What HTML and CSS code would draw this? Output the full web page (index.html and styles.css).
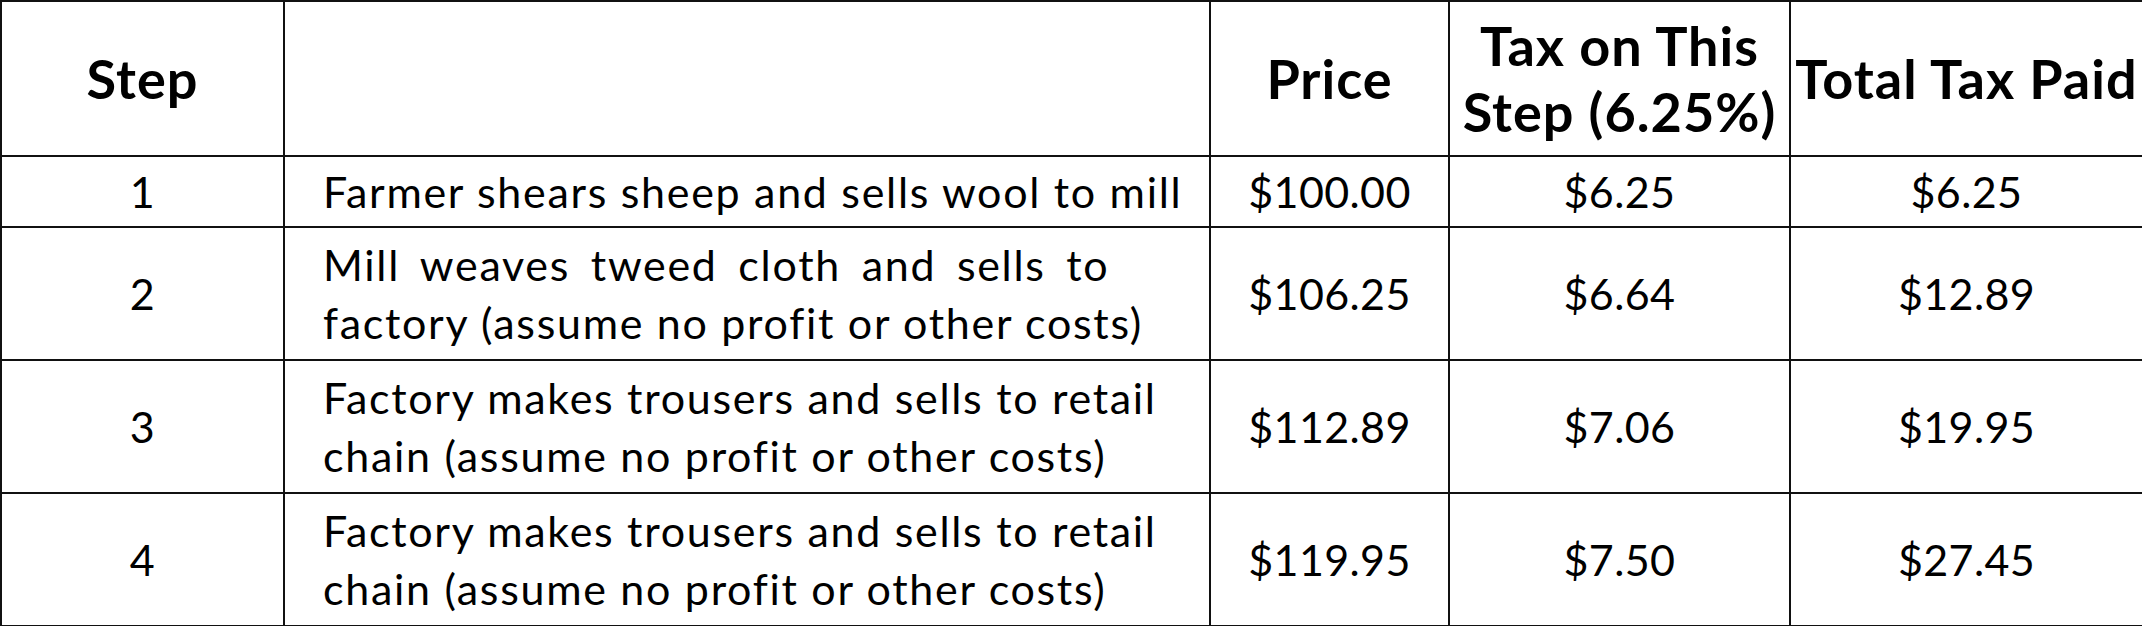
FILE: index.html
```html
<!DOCTYPE html>
<html>
<head>
<meta charset="utf-8">
<link rel="stylesheet" href="styles.css">
</head>
<body>
<table class="tax">
  <colgroup>
    <col class="c-step">
    <col class="c-desc">
    <col class="c-price">
    <col class="c-tax">
    <col class="c-total">
  </colgroup>
  <thead>
    <tr class="head">
      <th>Step</th>
      <th></th>
      <th>Price</th>
      <th>Tax on This<br>Step (6.25%)</th>
      <th>Total Tax Paid</th>
    </tr>
  </thead>
  <tbody>
    <tr class="short">
      <td>1</td>
      <td class="desc">Farmer shears sheep and sells wool to mill</td>
      <td>$100.00</td>
      <td>$6.25</td>
      <td>$6.25</td>
    </tr>
    <tr class="tall">
      <td>2</td>
      <td class="desc"><span class="spread">Mill weaves tweed cloth and sells to</span><br>factory (assume no profit or other costs)</td>
      <td>$106.25</td>
      <td>$6.64</td>
      <td>$12.89</td>
    </tr>
    <tr class="tall">
      <td>3</td>
      <td class="desc">Factory makes trousers and sells to retail<br>chain (assume no profit or other costs)</td>
      <td>$112.89</td>
      <td>$7.06</td>
      <td>$19.95</td>
    </tr>
    <tr class="tall">
      <td>4</td>
      <td class="desc">Factory makes trousers and sells to retail<br>chain (assume no profit or other costs)</td>
      <td>$119.95</td>
      <td>$7.50</td>
      <td>$27.45</td>
    </tr>
  </tbody>
</table>
</body>
</html>
```

FILE: styles.css
```css
html, body {
  margin: 0;
  padding: 0;
  background: #fff;
}

.tax {
  border-collapse: collapse;
  table-layout: fixed;
  width: 2142px;
  font-family: Lato, "Liberation Sans", sans-serif;
  color: #000;
}

.c-step { width: 283px; }
.c-desc { width: 926px; }
.c-price { width: 239px; }
.c-tax { width: 341px; }
.c-total { width: 353px; }

.tax th,
.tax td {
  border: 2px solid #111;
  padding: 0 2px;
  text-align: center;
  vertical-align: middle;
}

.tax th {
  font-weight: 700;
  font-size: 54px;
  line-height: 66px;
  letter-spacing: 1px;
}

.tax td {
  font-weight: 400;
  font-size: 43px;
  line-height: 58px;
  letter-spacing: 0.4px;
}

.head { height: 155px; }
.short { height: 71px; }
.tall { height: 133px; }

.tax td.desc {
  text-align: left;
  padding-left: 38px;
  white-space: nowrap;
  letter-spacing: 1.7px;
}

.spread {
  word-spacing: 8px;
}
```
